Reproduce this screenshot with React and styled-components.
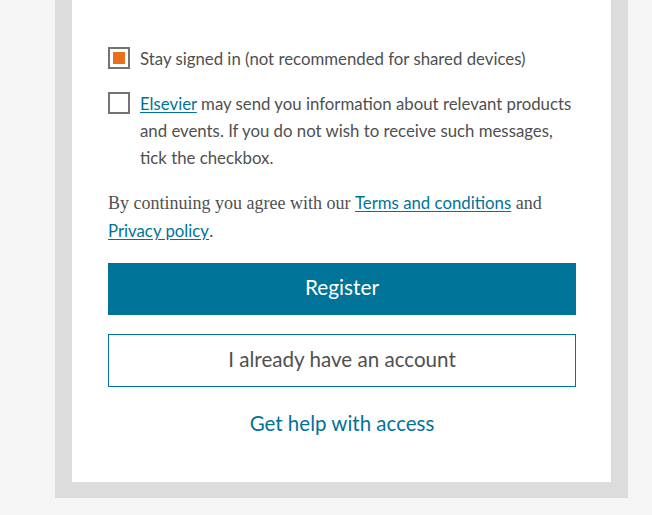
import React from 'react'
import styled, { createGlobalStyle } from 'styled-components'

const GlobalStyle = createGlobalStyle`
  html, body {
    margin: 0;
    padding: 0;
    background: #f5f5f5;
  }
  body {
    font-family: Lato, "Open Sans", sans-serif;
  }
`

const App = () => {
  return (
    <>
      <GlobalStyle />
      <Frame>
        <Card>
          <CheckRow>
            <Box checked />
            <Label>Stay signed in (not recommended for shared devices)</Label>
          </CheckRow>
          <CheckRow>
            <Box />
            <Label>
              <Link href="#">Elsevier</Link> may send you information about relevant products
              and events. If you do not wish to receive such messages, tick the checkbox.
            </Label>
          </CheckRow>
          <Terms>
            By continuing you agree with our <Link href="#">Terms and conditions</Link> and{' '}
            <Link href="#">Privacy policy</Link>.
          </Terms>
          <Primary>Register</Primary>
          <Secondary>I already have an account</Secondary>
          <Help href="#">Get help with access</Help>
        </Card>
      </Frame>
    </>
  )
}

export default App

const Frame = styled.div`
  margin-left: 55px;
  width: 573px;
  box-sizing: border-box;
  background: #dcdcdc;
  padding: 0 17px 16px;
`

const Card = styled.div`
  background: #fff;
  padding: 45px 35px 45px 36px;
  display: flex;
  flex-direction: column;
`

const CheckRow = styled.div`
  display: flex;
  align-items: flex-start;
  gap: 10px;
  margin-bottom: 18px;
`

const Box = styled.span`
  flex: none;
  width: 22px;
  height: 22px;
  margin-top: 2px;
  box-sizing: border-box;
  border: 2px solid #737373;
  background: #fff;
  position: relative;

  &::after {
    content: '';
    display: ${(p) => (p.checked ? 'block' : 'none')};
    position: absolute;
    inset: 3px;
    background: #e9711c;
  }
`

const Label = styled.div`
  font-size: 16.8px;
  line-height: 27px;
  color: #505050;
`

const Link = styled.a`
  font-family: Lato, "Open Sans", sans-serif;
  font-size: 16.8px;
  color: #007398;
  text-decoration: underline;
  text-underline-offset: 2px;
`

const Terms = styled.p`
  margin: 0 0 18px;
  font-family: "Liberation Serif", serif;
  font-size: 18px;
  line-height: 27px;
  color: #505050;
`

const Primary = styled.button`
  height: 52px;
  padding: 0 0 5px;
  border: none;
  background: #007398;
  color: #fff;
  font-family: Lato, "Open Sans", sans-serif;
  font-size: 20.8px;
  margin-bottom: 19px;
`

const Secondary = styled.button`
  height: 53px;
  padding: 0 0 4px;
  border: 1px solid #007398;
  background: #fff;
  color: #505050;
  font-family: Lato, "Open Sans", sans-serif;
  font-size: 20.6px;
  margin-bottom: 23px;
`

const Help = styled.a`
  align-self: center;
  font-size: 20.5px;
  line-height: 27px;
  color: #007398;
  text-decoration: none;
`
